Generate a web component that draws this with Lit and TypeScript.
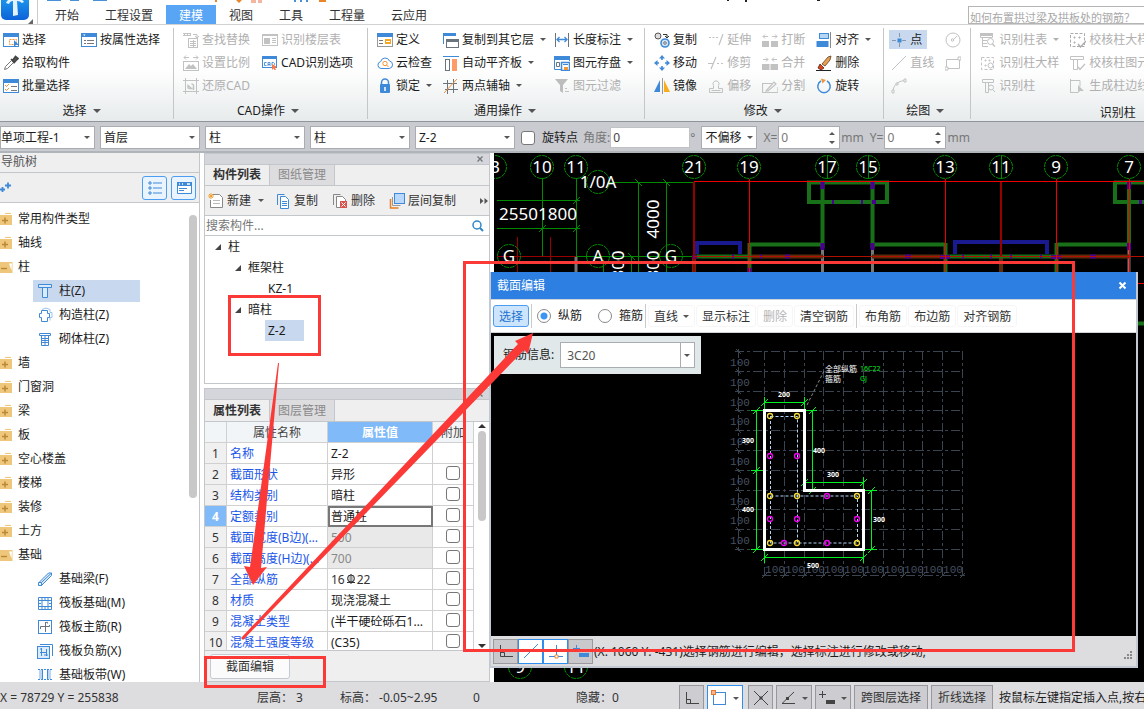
import { LitElement, html, svg, css, nothing } from "lit";
import { customElement, state } from "lit/decorators.js";
import { classMap } from "lit/directives/class-map.js";

const B = "#3f8ad8";
const D = "#c2c2c2";
const O = "#f0953a";
const K = "#6b747c";

const ico = (body: unknown, w = 16, h = 16) =>
  html`<svg class="ico" width=${w} height=${h} viewBox="0 0 ${w} ${h}" fill="none" aria-hidden="true">${body}</svg>`;

const windowFrame = (color: string, inner: unknown) => svg`
  <rect x="0.5" y="1.5" width="15" height="13" fill="#fff" stroke=${color}/>
  <rect x="0" y="1" width="16" height="4" fill=${color}/>${inner}`;

const icons: Record<string, unknown> = {
  select: ico(windowFrame(B, svg`<rect x="6.5" y="7.5" width="7" height="5" stroke=${O} stroke-dasharray="2 1"/><path d="M11 8v7l2-2h3z" fill=${B}/>`)),
  byProp: ico(windowFrame(B, svg`<path d="M2 2.500h2.500l-1.200 1.500z" fill="#fff"/><path d="M3 8.500h2M6 8.500h7M3 11.500h2M6 11.500h7" stroke="#777"/>`)),
  picker: ico(svg`<path d="M1.500 14.500l1-3 6-6 2 2-6 6z" stroke="#777" fill="#fff"/><path d="M8 4l4 4M9.500 5.500l3-4 2.500 2-4 4z" stroke="#444" stroke-width="1.600" fill="#555"/>`),
  batch: ico(windowFrame(B, svg`<path d="M2 7l1.500 1.500L6 6M2 11l1.500 1.500L6 10" stroke=${O}/><path d="M8 8.500h6M8 12.500h6" stroke="#777"/>`)),
  replace: ico(svg`<path d="M0 3.500h8M0 1.500h8M1.500 1v3M4.500 1v3M7.500 1v3M10 2.500h4v3M12 4l2 2 2-2" stroke=${D}/><rect x="5.500" y="6.500" width="9" height="9" stroke=${D}/><path d="M7 9.500h6M7 11.500h6M7 13.500h6M10.500 8v7" stroke=${D}/>`),
  floorTable: ico(svg`<rect x="0.500" y="2.500" width="15" height="11" stroke=${D}/><path d="M0 2h16v2H0z" fill=${D}/><rect x="2" y="6" width="6" height="6" fill=${D}/><path d="M10 6.500h4M10 8.500h4M10 10.500h4" stroke=${D}/>`),
  scale: ico(svg`<path d="M1 2.500h5M10 2.500h5M3 .5l-2 2 2 2M13 .5l2 2-2 2" stroke=${D}/><rect x="0.500" y="6.500" width="15" height="9" stroke=${D}/><path d="M2 14l4-5 2 2 2-2 4 5z" fill=${D}/>`),
  cadOption: ico(svg`<rect x="0.500" y="1.500" width="14" height="11" fill="#fff" stroke=${B}/><path d="M0 1h15v3H0z" fill=${B}/><path d="M4.500 7.500h-2v3h2M6 11V7.500h2V11M6 9.500h2M10 7.500h1.500l1 1v1l-1 1H10z" stroke=${B} stroke-width=".9"/><path d="M10 9l5 3-2 1 1 2h-1.500l-1-1.500L10 15z" fill="#f47b4b"/>`),
  restore: ico(svg`<path d="M0 2.500h16M0 13.500h16M2.500 0v16M13.500 0v16" stroke=${D}/><path d="M5 10.500V7.500L8 10M5.500 10.500h4M10.500 12V7l-2-1.500" stroke=${D} stroke-width="1.400"/>`),
  define: ico(svg`<rect x="0.500" y="1.500" width="15" height="13" fill="#fff" stroke="#999"/><path d="M0 1h16v4H0z" fill=${B}/><path d="M2 8.500h4M2 11.500h4" stroke="#777"/><rect x="8" y="7" width="6" height="5" fill="#f5a623"/><path d="M9 9.500h4" stroke="#fff"/>`),
  cloud: ico(svg`<path d="M4 13.500a3.500 3.500 0 0 1-.3-6.900A4.600 4.600 0 0 1 12.500 6a3.800 3.800 0 0 1-.3 7.500z" fill="#fff" stroke=${B}/><circle cx="8" cy="8.500" r="2.200" stroke=${O}/><path d="M9.500 10l2 2" stroke=${O}/>`),
  lock: ico(svg`<path d="M4.500 7V4.500a3.500 3.500 0 0 1 7 0V7" stroke=${B} stroke-width="1.500"/><rect x="3" y="6" width="10" height="9" rx="1" fill=${B}/><path d="M8 9v4" stroke="#fff" stroke-width="1.500"/>`),
  copyFloor: ico(svg`<path d="M.5 12V1.500h12V4" stroke=${B}/><path d="M0 1h13v3H0z" fill=${B}/><rect x="3.500" y="7.500" width="12" height="8" fill="#fff" stroke=${K}/><path d="M3 7h13v3H3z" fill=${K}/>`),
  alignSlab: ico(svg`<path d="M0 1.500h16" stroke=${B}/><rect x="2.500" y="4.500" width="4" height="11" stroke=${K}/><rect x="9" y="4" width="5" height="12" fill="#ff9a6a"/>`),
  axis2: ico(svg`<path d="M0 5.500h14M2 11.500h13M4.500 2v14M10.500 1v14" stroke=${K}/><path d="M1 15L14 1" stroke=${O}/>`),
  length: ico(svg`<path d="M1.500 1v14M14.500 1v14" stroke=${K}/><path d="M3 7.500h10M5.500 5L3 7.500 5.500 10M10.500 5L13 7.500 10.500 10" stroke=${B} stroke-width="1.300"/>`),
  saveEl: ico(svg`<path d="M7 14.500H.5v-13h15V6" stroke=${B}/><path d="M0 1h16v4H0z" fill=${B}/><path d="M2.500 7.500h3v4h-3z" stroke=${K}/><rect x="7.500" y="7.500" width="8" height="8" fill="#fff" stroke=${B} stroke-width="1.500"/><path d="M10 12h4v3h-4z" fill=${O}/><path d="M9 9.500h5" stroke=${B}/>`),
  filter: ico(svg`<path d="M1 1h13L9 7v8l-3-2V7z" fill="#bdbdbd"/><path d="M11 10.500h2M11 13.500h4" stroke=${D}/>`),
  copy: ico(svg`<circle cx="4" cy="4" r="3" stroke="#555" fill="#ddd"/><circle cx="11" cy="11" r="4" stroke=${B} stroke-width="1.600" fill="#cfe4f8"/><circle cx="11" cy="11" r="1.300" stroke="#777"/><path d="M9 2.500h4v3M11 4l2 2 2-2" stroke="#333"/>`),
  move: ico(svg`<path d="M8 5V1M8 11v4M5 8H1M11 8h4" stroke=${B} stroke-width="1.600"/><path d="M8 0l3 3.500H5zM8 16l3-3.500H5zM0 8l3.500-3v6zM16 8l-3.500-3v6z" fill=${B}/>`),
  mirror: ico(svg`<path d="M6 2v12H0z" fill=${B}/><path d="M8.500 0v16" stroke="#999"/><path d="M10 2v12h6z" fill="#f8ae1c"/>`),
  extend: ico(svg`<path d="M1 5.500h2M4.500 5.500h2M8 5.500h2M11 13l4-11" stroke=${D} stroke-width="1.200"/>`),
  trim: ico(svg`<path d="M0 8.500h5M3 14L8 2M9 8.500h2M13 8.500h2" stroke=${D} stroke-width="1.200"/>`),
  offset: ico(svg`<path d="M1.500 14.500v-4h4v-3a3 3 0 1 1 5 0v3h4v4z" stroke=${D}/><path d="M3.500 12.500h9" stroke=${D}/>`),
  breakEl: ico(svg`<rect x="0" y="9" width="7" height="6" fill=${D}/><rect x="9" y="9" width="7" height="6" fill=${D}/><path d="M1 4.500h5M10 4.500h5M3 2.500l-2 2 2 2M13 2.500l2 2-2 2" stroke=${D}/>`),
  merge: ico(svg`<rect x="0" y="9" width="7.500" height="6" fill=${D}/><rect x="8.500" y="9" width="7.500" height="6" fill=${D}/><path d="M1 4.500h5M10 4.500h5M4 2.500l2 2-2 2M12 2.500l-2 2 2 2" stroke=${D}/>`),
  split: ico(svg`<path d="M0 5.500h10M3 14.500h13V9M.5 6v8.500H3M4 13l8-9 2 2-8 7z" stroke=${D} stroke-width="1.200"/>`),
  align: ico(svg`<path d="M14.500 0v16" stroke="#8a8a8a"/><rect x="3.500" y="1.500" width="9" height="5" stroke=${B} fill="#b5d5f5"/><rect x="0.500" y="9" width="12" height="6" fill=${B}/>`),
  erase: ico(svg`<path d="M6 9l6-7 3-1-1 4-5 6z" fill="#e9a050" stroke="#5b3b20" stroke-width=".8"/><path d="M4 9l4 4-3 2-3-2z" fill="#d9441c" stroke="#5b2010" stroke-width=".8"/><path d="M0 15.500h15" stroke="#222"/>`),
  rotate: ico(svg`<path d="M11 3a6.200 6.200 0 1 1-6 0" stroke=${B} stroke-width="1.500"/><path d="M5 .5l5 1.500-3.500 3.500z" fill=${O}/>`),
  point: ico(svg`<path d="M1 8.500h4M11 8.500h4M8.500 1v4M8.500 11v4" stroke="#8a97a6"/><rect x="6.500" y="6.500" width="4" height="4" fill=${B}/>`),
  line: ico(svg`<path d="M1 15L15 1" stroke=${D}/>`),
  arc: ico(svg`<path d="M2 14C2 8 6 3 14 2.500" stroke=${D}/><path d="M1 12h2v3H1zM5 5h2v2H5zM13 1h2v3h-2z" fill="#fff" stroke=${D}/>`),
  circle: ico(svg`<circle cx="8" cy="8" r="7" stroke=${D}/><path d="M8 8l4-4" stroke=${D}/><circle cx="7.500" cy="8" r="1.200" stroke=${D}/>`),
  rect: ico(svg`<path d="M1.500 4.500h13v9h-13z" stroke=${D}/><path d="M0 12h3v3H0zM13 2h3v3h-3z" fill="#fff" stroke=${D}/>`),
  colTable: ico(svg`<path d="M.5 1.500h12v4H.5zM2.500 6v8.500H8M2 8.500h5M2 11.500h5" stroke=${D}/><path d="M0 1h13v3H0z" fill=${D}/><circle cx="10.500" cy="9.500" r="3" stroke=${D}/><path d="M12.500 12l2.500 2.500" stroke=${D} stroke-width="1.500"/>`),
  colDetail: ico(svg`<rect x="1.500" y="2.500" width="12" height="12" stroke=${D} stroke-dasharray="3 2"/><path d="M5 5h1v1H5zM9 5h1v1H9zM5 10h1v1H5z" stroke=${D}/><circle cx="10.500" cy="10.500" r="2.500" stroke=${D}/>`),
  colFind: ico(svg`<path d="M2.500 1.500h11v3h-11zM5.500 4.500v10h3v-10" stroke=${D}/><circle cx="11" cy="9.500" r="2.500" stroke=${D}/><path d="M12.500 11.500L15 14" stroke=${D}/>`),
  checkDetail: ico(svg`<rect x="0.500" y="1.500" width="14" height="13" stroke="#aaa" stroke-dasharray="3 1.500"/><path d="M4 5h1v1H4zM9 5h1v1H9zM4 10h1v1H4z" stroke="#aaa"/><path d="M8 12l2.500 3L16 9" stroke="#aaa" stroke-width="1.300"/>`),
  checkEl: ico(svg`<path d="M.5 1.500h13v3H.5zM3.500 4.500v10h4v-10" stroke=${D}/><path d="M8 12l2 2.500L15 9" stroke=${D} stroke-width="1.300"/>`),
  genEdge: ico(svg`<path d="M.5 1v14M0 14.500h8M1 2.500h9v6" stroke=${D}/><path d="M8 7v8l2-2h4z" fill=${D}/>`),
};

interface Tool { label: string; icon: string; off?: boolean; menu?: boolean; on?: boolean; }
interface Group { name: string; cols: Tool[][]; menu: boolean; cls: string; }
const t = (icon: string, label: string, o: Partial<Tool> = {}): Tool => ({ icon, label, ...o });
const off = { off: true };
const menu = { menu: true };

const GROUPS: Group[] = [
  { name: "选择", menu: true, cls: "first", cols: [[t("select", "选择"), t("picker", "拾取构件"), t("batch", "批量选择")], [t("byProp", "按属性选择")]] },
  { name: "CAD操作", menu: true, cls: "cad", cols: [
    [t("replace", "查找替换", off), t("scale", "设置比例", off), t("restore", "还原CAD", off)],
    [t("floorTable", "识别楼层表", off), t("cadOption", "CAD识别选项")]] },
  { name: "通用操作", menu: true, cls: "tight", cols: [
    [t("define", "定义"), t("cloud", "云检查"), t("lock", "锁定", menu)],
    [t("copyFloor", "复制到其它层", menu), t("alignSlab", "自动平齐板", menu), t("axis2", "两点辅轴", menu)],
    [t("length", "长度标注", menu), t("saveEl", "图元存盘", menu), t("filter", "图元过滤", off)]] },
  { name: "修改", menu: true, cls: "", cols: [
    [t("copy", "复制"), t("move", "移动"), t("mirror", "镜像")],
    [t("extend", "延伸", off), t("trim", "修剪", off), t("offset", "偏移", off)],
    [t("breakEl", "打断", off), t("merge", "合并", off), t("split", "分割", off)],
    [t("align", "对齐", menu), t("erase", "删除"), t("rotate", "旋转")]] },
  { name: "绘图", menu: true, cls: "draw", cols: [
    [t("point", "点", { on: true }), t("line", "直线", off), t("arc", "", off)],
    [t("circle", "", off), t("rect", "", off)]] },
  { name: "识别柱", menu: false, cls: "wide", cols: [
    [t("colTable", "识别柱表", { off: true, menu: true }), t("colDetail", "识别柱大样", off), t("colFind", "识别柱", off)],
    [t("checkDetail", "校核柱大样", off), t("checkEl", "校核柱图元", off), t("genEdge", "生成柱边线", off)]] },
];

const shared = css`
  :host {
    display: block;
    box-sizing: border-box;
    font: 12px/20px "Noto Sans", "Noto Sans CJK SC", sans-serif;
    color: #1c1c1c;
    white-space: nowrap;
  }
  *, *::before, *::after { box-sizing: border-box; }
  button, input, select { font: inherit; color: inherit; margin: 0; padding: 0; border: 0; background: none; border-radius: 0; }
  button { display: inline-flex; align-items: center; cursor: pointer; }
  ul { list-style: none; margin: 0; padding: 0; display: flex; flex-direction: column; }
  .ico { display: block; flex: none; }
  .caret { flex: none; border: 3px solid transparent; border-top-color: #555; border-bottom: 0; }
  .check { appearance: none; width: 14px; height: 14px; border: 1px solid #777; border-radius: 3px; background: #fff; display: block; flex: none; }
  .check:checked { background: #3f8ad8; }
  .combo { position: relative; display: block; flex: none; height: 23px; background: #fff; border: 1px solid #a9acb1; }
  .combo select { appearance: none; width: 100%; height: 100%; padding: 0 14px 0 3px; outline: 0; display: block; }
  .combo::after { content: ""; position: absolute; right: 4px; top: 9px; border: 3px solid transparent; border-top-color: #555; border-bottom: 0; pointer-events: none; }
`;

@customElement("ribbon-bar")
class RibbonBar extends LitElement {
  @state() tab = "建模";
  static styles = [shared, css`
    .top { display: flex; align-items: flex-end; height: 25px; background: #fff; border-bottom: 1px solid #d2d2d2; position: relative; }
    .brand { width: 38px; height: 24px; border-right: 1px solid #ccc; margin-right: 4px; }
    .quick { position: absolute; left: 0; top: 0; pointer-events: none; }
    .tab { height: 19px; padding: 2px 13px 0; color: #333; }
    .tab.on { background: #58a5f5; color: #fff; }
    .ask { margin-left: auto; width: 176px; height: 18px; border: 1px solid #b4b4b4; border-right: 0; padding: 5px 0 0 1px; font-size: 11px; line-height: 14px; overflow: hidden; }
    .ask::placeholder { color: #a8a8a8; }
    .ribbon { display: flex; height: 97px; padding-top: 3px; background: linear-gradient(#fff 45%, #e7ebec); border-bottom: 1px solid #8e959b; overflow: hidden; }
    .group { flex: none; display: flex; flex-direction: column; padding: 0 12px 0 9px; border-right: 1px solid #c4c6c8; margin-bottom: 2px; }
    .group.first { padding: 0 13px 0 3px; }
    .group.cad { padding-right: 14px; }
    .group.tight { padding-right: 11px; }
    .group.draw { padding: 0 9px 0 5px; }
    .group.wide { min-width: 296px; border-right: 0; }
    .cols { display: flex; gap: 11px; }
    .cad .cols { gap: 12px; }
    .tight .cols { gap: 8px; }
    .tight .col:first-child { margin-right: 3px; }
    .draw .cols { gap: 9px; }
    .col { display: flex; flex-direction: column; align-items: flex-start; }
    .tool { height: 23px; gap: 3px; }
    .tool .caret { margin-left: 3px; }
    .draw .tool { padding-left: 2px; }
    .tool.off { color: #b0b0b0; }
    .tool.off .caret { border-top-color: #b0b0b0; }
    .tool.on { height: 19px; margin: 2px 0; padding-right: 5px; background: #c8d8ef; }
    .name { flex: none; display: flex; justify-content: center; align-items: center; gap: 6px; height: 28px; }
    .name .caret { border-width: 4px; border-bottom: 0; }
    .wide .name { height: 32px; }
  `];
  render() {
    return html`
      <header class="top">
        <div class="brand">
          <svg width="34" height="24" viewBox="0 0 34 24" role="img" aria-label="应用菜单">
            <defs><linearGradient id="lg" x1="0" y1="0" x2="0" y2="1"><stop offset="0" stop-color="#1fa6f3"/><stop offset="1" stop-color="#0d62d8"/></linearGradient></defs>
            <rect x="1" y="-8" width="28" height="28" rx="5" fill="url(#lg)"/>
            <path d="M6 3q2-5 8-5 8 0 10 4l-2 1q-2-2-5-2l1 14-5 1V1q-3 0-4 3z" fill="#e4f2fd"/>
            <path d="M33 19v5h-5z" fill="#666"/>
          </svg>
        </div>
        <svg class="quick" width="840" height="4" viewBox="0 0 840 4" aria-hidden="true">
          <path d="M47 0h14v1H47zM70 0h9v1h-9zM93 0h14v1H93zM294 0h2v2h-2zM300 0h2v2h-2zM306 0h2v2h-2z" fill="#4a90d9"/>
          <path d="M215 0h2v2h-2zM236 0h6l-3 3zM319 0h7v2h-7z" fill="#e8872a"/><path d="M251 0h5v3h-5zM258 0h4v3h-4z" fill="#f3b6a0"/>
          <path d="M727 0h2v1h-2zM745 0h2v2h-2zM817 0h3v1h-3z" fill="#222"/>
        </svg>
        ${["开始", "工程设置", "建模", "视图", "工具", "工程量", "云应用"].map((n) => html`
          <button class=${classMap({ tab: true, on: n === this.tab })} @click=${() => (this.tab = n)}>${n}</button>`)}
        <input class="ask" aria-label="帮助搜索" placeholder="如何布置拱过梁及拱板处的钢筋？">
      </header>
      <div class="ribbon">
        ${GROUPS.map((g) => html`
          <section class="group ${g.cls}">
            <div class="cols">${g.cols.map((c) => html`<div class="col">${c.map((x) => html`
              <button class=${classMap({ tool: true, off: !!x.off, on: !!x.on })} ?disabled=${!!x.off} aria-label=${x.label || x.icon}>
                ${icons[x.icon]}${x.label ? html`<span>${x.label}</span>` : nothing}${x.menu ? html`<i class="caret"></i>` : nothing}
              </button>`)}</div>`)}</div>
            <div class="name">${g.name}${g.menu ? html`<i class="caret"></i>` : nothing}</div>
          </section>`)}
      </div>`;
  }
}

@customElement("context-bar")
class ContextBar extends LitElement {
  static styles = [shared, css`
    .bar { display: flex; align-items: center; height: 31px; padding-top: 2px; background: #c9cbd0; border-bottom: 2px solid #b0b5ba; overflow: hidden; }
    .combo { width: 100px; margin-right: 5px; }
    .combo.cut { width: 95px; }
    .combo.cut select { padding-left: 0; }
    .combo.small { width: 56px; margin: 0 6px; }
    .combo.small::after { right: 3px; }
    .grey { color: #777; }
    .check { margin: 0 7px 0 1px; }
    .rot { margin-right: 5px; }
    .field { width: 80px; height: 21px; background: #fff; border: 1px solid #c0c2c6; padding: 0 2px; color: #444; }
    .num { display: flex; align-items: center; width: 62px; height: 23px; background: #fff; border: 1px solid #a9acb1; color: #777; padding: 0 4px 0 2px; margin: 0 1px; }
    .num input { flex: 1; min-width: 0; outline: 0; }
    .gap { margin-right: 6px; }
  `];
  num(id: string, name: string) {
    return html`<label class="grey" for=${id}>${name}=</label>
      <span class="num"><input id=${id} value="0"><svg width="6" height="12" viewBox="0 0 6 12" aria-hidden="true"><path d="M0 3h6L3 0zM0 9h6l-3 3z" fill="#555"/></svg></span>
      <span class="grey gap">mm</span>`;
  }
  render() {
    const combos = [["项目", "单项工程-1", "cut"], ["楼层", "首层", ""], ["类别", "柱", ""], ["类型", "柱", ""], ["构件", "Z-2", ""]];
    return html`<div class="bar">
      ${combos.map(([n, v, c]) => html`<span class="combo ${c}"><select aria-label=${n}><option>${v}</option></select></span>`)}
      <input class="check" type="checkbox" id="rp"><label class="rot" for="rp">旋转点</label>
      <label class="grey" for="angle">角度:</label><input class="field" id="angle" value="0"><span class="grey">°</span>
      <span class="combo small"><select aria-label="偏移方式"><option>不偏移</option></select></span>
      ${this.num("dx", "X")}${this.num("dy", "Y")}
    </div>`;
  }
}

const leaf: Record<string, unknown> = {
  col: ico(svg`<path d="M1.500 1.500h13v3h-13zM5.500 4.500v10h5v-10" stroke=${B} fill="#dcebfb"/>`),
  ccol: ico(svg`<path d="M5 2.500q4-3 8 0v3h2v5h-2v3" stroke="#9cc4ee"/><path d="M4.500 3.500h6v3h2v4h-2v4h-6v-4h-2v-4h2z" stroke=${B} fill="#fff"/>`),
  mcol: ico(svg`<path d="M2.500 2.500h11v2h-11z" stroke=${B}/><path d="M4.500 4.500h7v10h-7zM4 7.500h8M4 9.500h8M4 11.500h8M8 5v9" stroke=${B}/>`),
  beam: ico(svg`<path d="M1.500 12l10-10h3v2.500l-10 10h-3zM4.500 14.500v-3h-3M4.500 11.500l10-9.500" stroke=${B} fill="#dcebfb"/>`),
  raft: ico(svg`<path d="M1.500 2.500h13v12h-13zM5 2v13M11 2v13M1 5.500h14M1 11.500h14" stroke=${B}/><path d="M1 8.500h3M12 8.500h3M8 2v3M8 12v3" stroke=${B}/>`),
  main: ico(svg`<rect x="1.500" y="1.500" width="13" height="13" stroke=${B}/><path d="M8.500 3.500q3-1 2 1M8.500 3v10M3.500 10V7.500h9V6" stroke=${K}/>`),
  neg: ico(svg`<path d="M3 1.500h12.500V13" stroke=${B}/><rect x="0.500" y="3.500" width="12" height="12" stroke=${B} fill="#dcebfb"/><path d="M4.500 5v8M9.500 6v7M3 9.500h6M7 12h4M3 6h2" stroke=${B}/>`),
  strip: ico(svg`<path d="M2 3h3v9H2zM11 3h3v9h-3z" fill="#b9d6f5"/><path d="M1 2.500h14M1 12.500h14" stroke=${B} stroke-dasharray="2 1"/><path d="M5.500 3v9M10.500 3v9" stroke=${B}/>`),
};

@customElement("nav-tree")
class NavTree extends LitElement {
  static styles = [shared, css`
    :host { display: flex; flex-direction: column; border-right: 1px solid #c3c6cb; background: #fff; overflow: hidden; }
    .title { height: 20px; padding-left: 1px; background: #efeff0; border-bottom: 1px solid #c3c6cb; color: #555; line-height: 18px; flex: none; }
    .tools { height: 30px; flex: none; display: flex; align-items: center; gap: 4px; padding-right: 3px; background: #efeff0; border-bottom: 1px solid #c3c6cb; }
    .plus { margin-right: auto; }
    .mode { width: 25px; height: 24px; justify-content: center; border: 1px solid #4a9df0; border-radius: 3px; background: #eaf4fe; }
    .body { flex: 1; min-height: 0; display: flex; justify-content: space-between; padding: 4px 2px 0 0; overflow: hidden; }
    .row { flex: none; display: flex; align-items: center; height: 24px; gap: 5px; line-height: 24px; }
    .row.leaf { height: 22px; margin: 1px 0 1px 33px; padding: 0 4px; gap: 6px; width: 107px; line-height: 22px; }
    .row.on { background: #c8d8ef; }
    .bar { flex: none; width: 8px; height: 283px; margin-top: 8px; border-radius: 4px; background: #c8c8c8; }
  `];
  render() {
    const folder = (open: boolean) => ico(open
      ? svg`<path d="M0 3h12.500v11H0z" fill="#efc77c"/><path d="M9 4.500h3l-.5 7z" fill="#fff"/><path d="M1 9.500h6" stroke="#b98a33" stroke-width="1.500"/>`
      : svg`<path d="M0 4h12v10H0z" fill="#efc77c"/><path d="M5 2h6v1H5z" fill="#efc77c"/><path d="M2 9.500h6M5 6.500v6" stroke="#b98a33" stroke-width="1.500"/>`, 13);
    const rows: [string, string][] = [["常用构件类型", "+"], ["轴线", "+"], ["柱", "-"], ["柱(Z)", "col"], ["构造柱(Z)", "ccol"], ["砌体柱(Z)", "mcol"],
      ["墙", "+"], ["门窗洞", "+"], ["梁", "+"], ["板", "+"], ["空心楼盖", "+"], ["楼梯", "+"], ["装修", "+"], ["土方", "+"], ["基础", "-"],
      ["基础梁(F)", "beam"], ["筏板基础(M)", "raft"], ["筏板主筋(R)", "main"], ["筏板负筋(X)", "neg"], ["基础板带(W)", "strip"]];
    return html`
      <div class="title">导航树</div>
      <div class="tools">
        <span class="plus">${ico(svg`<path d="M0 9.500h5M2.500 7v5M5 5.500h6M8 2.500v6" stroke=${B} stroke-width="1.800"/>`)}</span>
        <button class="mode" aria-label="列表视图">${ico(svg`<path d="M2 2h2v2H2zM2 7h2v2H2zM2 12h2v2H2z" stroke=${B}/><path d="M6 3h9M6 8h9M6 13h9" stroke=${B}/>`)}</button>
        <button class="mode" aria-label="面板视图">${ico(svg`<path d="M1.500 2.500h14v11h-14z" stroke=${B} fill="#fff"/><path d="M1 2h15v4H1z" fill=${B}/><path d="M3 4h1M6 4h1M11 4h3" stroke="#fff" stroke-width="1.500"/><path d="M3 8.500h8M3 10.500h5" stroke=${B}/>`)}</button>
      </div>
      <div class="body">
        <ul>${rows.map(([n, k]) => leaf[k]
          ? html`<li class=${classMap({ row: true, leaf: true, on: k === "col" })}>${leaf[k]}<span>${n}</span></li>`
          : html`<li class="row">${folder(k === "-")}<span>${n}</span></li>`)}</ul>
        <div class="bar"></div>
      </div>`;
  }
}

const panel = css`
  :host { display: flex; flex-direction: column; border: 1px solid #c3c6cb; background: #fff; overflow: hidden; }
  .strip { flex: none; height: 11px; background: #d4d6dc; border-bottom: 1px solid #c3c6cb; display: flex; justify-content: flex-end; padding-right: 5px; }
  .tabs { flex: none; display: flex; height: 22px; background: #efeff0; border-bottom: 1px solid #c3c6cb; }
  .tabs button { padding: 0 8px; border-right: 1px solid #c3c6cb; color: #8a8a8a; background: #dddddf; }
  .tabs .on { font-weight: bold; color: #333; background: #efeff0; }
`;
const closeStrip = html`<div class="strip"><button aria-label="关闭">${ico(svg`<path d="M1.500 1.500l5 5M6.500 1.500l-5 5" stroke="#777" stroke-width="1.400"/>`, 8, 8)}</button></div>`;

@customElement("component-panel")
class ComponentPanel extends LitElement {
  static styles = [shared, panel, css`
    .tabs { height: 21px; }
    .tools { flex: none; height: 30px; display: flex; align-items: center; padding: 0 1px 0 3px; background: #efeff0; border-bottom: 1px solid #c3c6cb; color: #333; }
    .tools button { gap: 3px; margin-right: 14px; }
    .tools button:first-child { margin-right: 11px; }
    .tools button:first-child .caret { margin-left: 4px; }
    .tools .more { margin: 0 0 0 auto; }
    .search { flex: none; display: flex; align-items: center; height: 20px; padding: 0 5px 0 1px; border-bottom: 1px solid #c3c6cb; }
    .search input { flex: 1; min-width: 0; outline: 0; height: 18px; }
    .search input::placeholder { color: #777; }
    .node { display: flex; align-items: center; height: 21px; gap: 7px; padding-left: 10px; }
    .lv2 { padding-left: 30px; }
    .lv3 { padding-left: 60px; }
    .pick { padding: 0 18px 0 3px; line-height: 21px; }
    .pick.on { background: #c8d8ef; }
  `];
  render() {
    const tri = ico(svg`<path d="M6 0v6H0z" fill="#444"/>`, 6, 6);
    return html`${closeStrip}
      <div class="tabs"><button class="on">构件列表</button><button>图纸管理</button></div>
      <div class="tools">
        <button>${ico(svg`<path d="M4.500 1.500h7l3 3v10h-12V7" stroke="#888" fill="#fff"/><path d="M5 7.500h7M5 10.500h7" stroke="#bbb"/><path d="M0 3h6M3 0v6M1 1l4 4M5 1L1 5" stroke="#f0a030"/>`)}新建<i class="caret"></i></button>
        <button>${ico(svg`<path d="M2.500 12V1.500h7" stroke=${B}/><path d="M5.500 3.500h5l3 3v9h-8z" stroke=${B} fill="#fff"/><path d="M7 8.500h5M7 10.500h5M7 12.500h5" stroke=${B}/>`)}复制</button>
        <button>${ico(svg`<path d="M1.500 12V1.500h7" stroke="#888"/><path d="M4.500 3.500h6l3 3v8h-9z" stroke="#888" fill="#fff"/><path d="M8 8h7v7H8z" fill="#d9534f"/><path d="M9.500 9.500l4 4M13.500 9.500l-4 4" stroke="#fff"/>`)}删除</button>
        <button>${ico(svg`<path d="M1.500 6v9h8" stroke="#e67e22" stroke-width="1.500"/><path d="M3.500 4v8.500h8" stroke="#999"/><rect x="5.500" y="0.500" width="10" height="10" fill="#b9d8fb" stroke=${B}/>`)}层间复制</button>
        <button class="more" aria-label="更多">${ico(svg`<path d="M0 1l3.500 3L0 7zM4.500 1L8 4 4.500 7z" fill="#555"/>`, 8, 8)}</button>
      </div>
      <div class="search"><input aria-label="搜索构件" placeholder="搜索构件...">${ico(svg`<circle cx="5" cy="5" r="4" stroke="#2f86c8" stroke-width="1.500"/><path d="M8 8l3 3" stroke="#2f86c8" stroke-width="2"/>`, 12, 12)}</div>
      <ul>
        <li class="node">${tri}柱</li>
        <li class="node lv2">${tri}框架柱</li>
        <li class="node lv3"><span class="pick">KZ-1</span></li>
        <li class="node lv2">${tri}暗柱</li>
        <li class="node lv3"><span class="pick on">Z-2</span></li>
      </ul>`;
  }
}

@customElement("property-panel")
class PropertyPanel extends LitElement {
  static styles = [shared, panel, css`
    .area { flex: 1; min-height: 0; display: flex; overflow: hidden; border-bottom: 1px solid #c3c6cb; }
    .scroll { flex: 1; min-width: 0; overflow: hidden; }
    table { width: 100%; table-layout: fixed; border-collapse: separate; border-spacing: 0; }
    th, td { height: 21px; padding: 1px 3px 0; border: 0 solid #d0d0d0; border-width: 0 1px 1px 0; font-weight: normal; text-align: left; line-height: 19px; overflow: hidden; text-overflow: ellipsis; }
    thead th { text-align: center; padding: 1px 0 0; background: #f2f5f8; color: #444; text-overflow: clip; }
    thead .hot { background: #80baf9; color: #fff; font-weight: bold; }
    tbody th { padding: 1px 0 0; text-align: center; background: #f0f0f0; color: #333; }
    tbody th.hot { background: #80baf9; color: #fff; font-weight: bold; }
    .c0 { width: 22px; } .c1 { width: 101px; } .c3 { width: 41px; }
    .name { color: #1a56e8; }
    .dim { background: #e9e9e9; color: #888; }
    .edit { border: 2px solid #777; padding: 0 1px; line-height: 17px; }
    .check { margin: -3px auto 0; }
    .rebar { display: inline-flex; align-items: center; gap: 1px; color: #333; vertical-align: top; }
    .bar { flex: none; width: 15px; display: flex; flex-direction: column; align-items: center; justify-content: space-between; padding: 2px 0; }
    .thumb { width: 8px; height: 90px; border-radius: 4px; background: #c8c8c8; margin: 3px 0 auto; }
    .foot { flex: none; height: 30px; padding: 3px 5px; background: #efeff0; }
    .foot button { height: 25px; padding: 1px 15px 0; background: #fbfbfc; border: 1px solid #c5c9d3; border-radius: 3px; color: #333; }
  `];
  render() {
    const rebar = html`<span class="rebar">16${ico(svg`<circle cx="5" cy="4.500" r="3.500" stroke="#333"/><path d="M5 0v10M1 8.500h8" stroke="#333"/><path d="M3 1v7M7 1v7" stroke="#333" stroke-width=".6"/>`, 10, 12)}22</span>`;
    const rows: [string, unknown, string?][] = [["名称", "Z-2"], ["截面形状", "异形"], ["结构类别", "暗柱"], ["定额类别", "普通柱", "edit"],
      ["截面宽度(B边)(mm)", "500", "dim"], ["截面高度(H边)(mm)", "700", "dim"], ["全部纵筋", rebar], ["材质", "现浇混凝土"],
      ["混凝土类型", "(半干硬砼砾石10mm)"], ["混凝土强度等级", "(C35)"]];
    return html`${closeStrip}
      <div class="tabs"><button class="on">属性列表</button><button>图层管理</button></div>
      <div class="area">
        <div class="scroll"><table>
          <thead><tr><th class="c0"></th><th class="c1">属性名称</th><th class="hot">属性值</th><th class="c3">附加</th></tr></thead>
          <tbody>${rows.map(([n, v, c], i) => html`<tr>
            <th class=${c === "edit" ? "hot" : ""}>${i + 1}</th><td class="name">${n}</td><td class=${c ?? ""}>${v}</td>
            <td>${i ? html`<input class="check" type="checkbox" aria-label="附加${n}">` : nothing}</td></tr>`)}</tbody>
        </table></div>
        <div class="bar">${ico(svg`<path d="M0 4h8L4 0z" fill="#333"/>`, 8, 4)}<div class="thumb"></div>${ico(svg`<path d="M0 0h8L4 4z" fill="#333"/>`, 8, 4)}</div>
      </div>
      <div class="foot"><button>截面编辑</button></div>`;
  }
}

@customElement("drawing-canvas")
class DrawingCanvas extends LitElement {
  static styles = [shared, css`
    :host { background: #000; overflow: hidden; min-width: 0; }
    svg { display: block; width: 100%; height: 100%; }
    text { fill: #fff; font-size: 17px; text-anchor: middle; }
    .g { stroke: #008a00; } .dr { stroke: #980000; } .r { stroke: #f00000; } .mid { stroke: #b01000; }
    .wall { stroke: #187018; stroke-width: 4; } .bw { stroke: #1a1a90; stroke-width: 4; }
    .gy { stroke: #777; stroke-width: 3; } .br { stroke: #5e2a0c; stroke-width: 4; } .p { stroke: #4b0090; stroke-width: 4; }
  `];
  render() {
    const bubbles: [number, number, string][] = [[495, 167, "3"], [542, 167, "10"], [576, 167, "11"], [598, 182, "1/0A"], [694, 167, "21"], [749, 167, "19"],
      [827, 167, "17"], [868, 167, "15"], [945, 167, "13"], [1001, 167, "11"], [1056, 167, "9"], [1129, 167, "7"],
      [509, 256, "G"], [598, 256, "A"], [671, 256, "G"], [520, 667, "9"], [576, 667, "11"]];
    return html`<svg role="img" aria-label="平面图"><g transform="translate(-494 -153)" fill="none">
      <path class="g" d="M610 182.500h84M497 200.500h83M497 228.500h83M542.500 178v78M576.500 178v78M638.500 182v92M666.500 182v92M576 256.500h118M603.500 260v14M631.500 256v18M827.500 155v24M868.500 155v24M1001.500 155v24M635 179l7 7M663 179l7 7M573 204l7-7M573 232l7-7M539 232l7-7M628 253l7 7"/>
      <path class="dr" d="M497 256.500h79M517.500 237v37M550.500 237v37"/>
      <path class="gy" d="M576 257v17M822.500 248v26M872.500 248v26M1129 248v26"/>
      <path class="br" d="M694 256v18M749 256.500h74M872 256.500h74M1056 256.500h73M1001 256v18"/>
      <path class="wall" d="M807 182.500h82M809 181v23M887 181v23M807 202h82M822.500 182v66M872.500 182v66M749 244.500h74M872 244.500h74M749.500 243v31M945.500 243v31M1056.500 243v31M1056 244.500h73M1129 182v66M1114 182.500h40M1115 181v23M1113 202h40M694 256.500h56M945 256.500h112M1138 323.500h8"/>
      <path class="bw" d="M697 254v-11h43v11M955 254v-12h92v12"/>
      <path class="p" d="M822.500 182v7M872.500 182v7M822.500 243v7M872.500 243v7M872 202h4M861 202h2M832 202h2M1129 182v7M1129 243v7M940 257h10M1051 257h10M692 257h5M905 256.500h6M785 256.500h5M760 256.500h2M1090 256.500h6M990 256.500h2M1010 256.500h2M962 256.500h2M1040 256.500h2M732 256.500h2M1139 202h3M749.500 268v6"/>
      <path class="dr" stroke-width="2" d="M694 182v92M1001 182v74"/>
      <path class="mid" d="M694 256.500h460"/>
      <path class="r" d="M694 181.500h460M749.500 179v95M945.500 179v95M1056.500 179v95M1129.500 179v95M1138 283.500h10"/>
      ${bubbles.map(([x, y, s]) => svg`<circle class="g" cx=${x} cy=${y} r="11.500" stroke-dasharray="5 1"/><text x=${x} y=${y + 6}>${s}</text>`)}
      <text x="538" y="220">25501800</text>
      <text transform="translate(659 219) rotate(-90)">4000</text>
      <text transform="translate(624 265) rotate(-90)">800</text>
      <text transform="translate(659 265) rotate(-90)">800</text>
    </g></svg>`;
  }
}

@customElement("section-dialog")
class SectionDialog extends LitElement {
  static styles = [shared, css`
    :host { display: flex; flex-direction: column; border: 2px solid #c3c9d2; border-top: 0; background: #000; overflow: hidden; }
    .title { flex: none; display: flex; justify-content: space-between; align-items: center; height: 27px; margin: 0 -2px; padding: 0 11px 0 8px; background: #2d7fe1; color: #fff; }
    .tools { flex: none; display: flex; align-items: center; gap: 1px; height: 34px; padding-left: 2px; background: #fff; border: 1px solid #cfd2d6; border-width: 1px 0; }
    .tools button { height: 22px; padding: 1px 5px 0; border: 1px solid #f6f6f6; border-radius: 3px; color: #333; gap: 5px; }
    .tools button.on { background: #cce4fc; border-color: #4a9df0; color: #1c72d0; }
    .tools button.off { color: #b5b5b5; }
    .sep { width: 1px; height: 24px; background: #c8cacd; margin: 0 1px; }
    .opt { display: flex; align-items: center; gap: 7px; margin: 0 0 0 3px; }
    .opt + .opt { margin-left: 15px; }
    .radio { appearance: none; width: 14px; height: 14px; border: 1px solid #888; border-radius: 50%; background: #fff; }
    .radio:checked { background: radial-gradient(circle, #3d95f2 0 3px, #fff 4px); }
    .view { flex: 1; min-height: 0; position: relative; }
    .view svg { display: block; width: 100%; height: 100%; }
    .info { position: absolute; left: 3px; top: 3px; display: flex; align-items: center; gap: 6px; height: 38px; padding: 0 6px 0 9px; background: #e1e8ea; }
    .info .combo { width: 135px; height: 26px; color: #555; }
    .info .combo select { padding-left: 6px; padding-top: 1px; }
    .info .combo::before { content: ""; position: absolute; right: 13px; top: 0; bottom: 0; border-left: 1px solid #a9acb1; }
    .info .combo::after { top: 11px; }
    .status { flex: none; height: 30px; display: flex; align-items: center; padding: 0 4px 0 2px; background: #dddde0; }
    .status button { width: 25px; height: 25px; justify-content: center; background: #c9c9cd; border: 1px solid #9a9a9e; }
    .status .on { background: #fff; border-color: #2f8fee; }
    .status span { padding: 2px 0 0 1px; }
    .grip { margin: 8px 0 0 auto; }
    .grid { stroke: #3a4350; stroke-dasharray: 9 3 3 3; }
    .dim { stroke: #00f020; }
    .n { fill: #fff; font: bold 7px "Noto Sans", "Noto Sans CJK SC", sans-serif; text-anchor: middle; }
    .lab { fill: #fff; font: 8px "Noto Sans", "Noto Sans CJK SC", sans-serif; }
    .gr { fill: #00f020; font-size: 7px; }
    .m { fill: #465060; font: 11px "Liberation Mono", monospace; text-anchor: middle; }
  `];
  section() {
    const step = Array.from({ length: 11 }, (_, i) => Math.round(i * 19.8));
    const yellow = [[770, 416], [797, 416], [770, 496], [797, 496], [857, 496], [770, 543], [797, 543], [857, 543]];
    const pink = [[770, 456], [797, 456], [827, 496], [770, 519], [797, 519], [857, 519], [784, 543], [827, 543]];
    const mark = (c: string) => ([x, y]: number[]) => svg`<circle cx=${x} cy=${y} r="2.500" stroke=${c} stroke-width="1.300"/>`;
    const nums: [number, number, string][] = [[784, 397, "200"], [748, 443, "300"], [748, 512, "400"], [819, 453, "400"], [833, 477, "300"], [879, 522, "300"], [813, 568, "500"]];
    const ticks = [[764, 402], [804, 402], [756, 410], [756, 470], [756, 549], [812, 410], [812, 490], [804, 482], [863, 482], [871, 490], [871, 549], [764, 557], [863, 557]];
    return svg`<g transform="translate(-491 -333)" fill="none">
      ${step.map((d) => svg`<path class="grid" d="M735 ${351.5 + d}h228M${764.5 + d} 351v227"/><path stroke="#3a4350" d="M736 ${349 + d}l5 5M${762 + d} 578l5-5"/>`)}
      <path class="grid" d="M738.500 349v202M762 575.500h203"/>
      ${step.slice(0, 10).map((d) => svg`<text class="m" x="740" y=${366 + d}>100</text><text class="m" x=${775 + d} y="573">100</text>`)}
      <path d="M807 405l17-34" stroke="#888" stroke-dasharray="3 2"/>
      <path class="dim" d="M764 402.500h41M764.500 397v13M804.500 397v13M756.500 410v140M751 410.500h13M751 470.500h13M751 549.500h13M812.500 410v81M805 410.500h12M806 490.500h11M804 482.500h60M804.500 477v13M863.500 477v13M871.500 490v60M864 490.500h13M864 549.500h13M764 557.500h100M764.500 551v12M863.500 551v12"/>
      ${ticks.map(([x, y]) => svg`<path class="dim" d="M${x - 3} ${y + 4}l7-7"/>`)}
      <path d="M764.500 410.500h40v80h59v59h-99z" stroke="#fff" stroke-width="3"/>
      <path d="M770.500 416.500h27v127M770.500 416v127h87v-47h-87" stroke="#b4d4f4" stroke-dasharray="3 2"/>
      ${yellow.map(mark("#f5dc3a"))}${pink.map(mark("#f000f0"))}
      ${nums.map(([x, y, s]) => svg`<text class="n" x=${x} y=${y}>${s}</text>`)}
      <text class="lab" x="825" y="372">全部纵筋</text><text class="lab gr" x="860" y="371">16C22</text>
      <text class="lab" x="825" y="382">箍筋</text><text class="lab gr" x="860" y="381">GJ</text>
    </g>`;
  }
  render() {
    return html`
      <div class="title">截面编辑<button aria-label="关闭">${ico(svg`<path d="M1.500 1.500l6 6M7.500 1.500l-6 6" stroke="#fff" stroke-width="2"/>`, 9, 9)}</button></div>
      <div class="tools">
        <button class="on">选择</button><i class="sep"></i>
        <label class="opt"><input class="radio" type="radio" name="bar" checked>纵筋</label>
        <label class="opt"><input class="radio" type="radio" name="bar">箍筋</label><i class="sep"></i>
        <button>直线<i class="caret"></i></button><button>显示标注</button><button class="off" disabled>删除</button><button>清空钢筋</button><i class="sep"></i>
        <button>布角筋</button><button>布边筋</button><button>对齐钢筋</button>
      </div>
      <div class="view">
        <svg role="img" aria-label="柱截面">${this.section()}</svg>
        <div class="info"><label for="rb">钢筋信息:</label><span class="combo"><select id="rb"><option>3C20</option></select></span></div>
      </div>
      <div class="status">
        <button aria-label="正交">${ico(svg`<path d="M2.500 2v11.500H15M2.500 9.500h4v4" stroke="#444"/>`)}</button>
        <button class="on" aria-label="直线">${ico(svg`<path d="M1 15L15 1" stroke=${B}/>`)}</button>
        <button class="on" aria-label="垂足">${ico(svg`<path d="M8.500 2v10M1 13.500h14" stroke=${B}/><path d="M7 12h3v3H7z" stroke=${O} fill="#fff"/>`)}</button>
        <button aria-label="动态输入">${ico(svg`<path d="M0 5.500h7M3.500 2v7" stroke=${B}/><path d="M6 10h10v4H6z" fill=${B}/>`)}</button>
        <span>(X: 1060 Y: -431)选择钢筋进行编辑，选择标注进行修改或移动;</span>
        <svg class="grip" width="8" height="8" viewBox="0 0 8 8" aria-hidden="true"><path d="M6 0h2v2H6zM3 3h2v2H3zM6 3h2v2H6zM0 6h2v2H0zM3 6h2v2H3zM6 6h2v2H6z" fill="#888"/></svg>
      </div>`;
  }
}

@customElement("status-bar")
class StatusBar extends LitElement {
  static styles = [shared, css`
    .bar { display: flex; height: 27px; background: #dddde0; color: #333; overflow: hidden; padding-top: 3px; }
    .cell { flex: none; line-height: 25px; }
    .pos { width: 257px; } .floor { width: 83px; } .elev { width: 133px; } .count { width: 103px; }
    button { flex: none; height: 26px; min-width: 25px; justify-content: center; gap: 5px; padding: 0 3px; margin-right: 3px; background: #cdcdd1; border: 1px solid #98989c; color: #333; }
    button.on { background: #fff; border-color: #2f8fee; margin-right: 5px; }
    button.text { padding: 0 6px; }
    .tip { padding-left: 3px; color: #1c1c1c; }
  `];
  render() {
    const caret = html`<i class="caret"></i>`;
    return html`<footer class="bar">
      <span class="cell pos">X = 78729 Y = 255838</span><span class="cell floor">层高： 3</span><span class="cell elev">标高： -0.05~2.95</span>
      <span class="cell count">0</span><span class="cell count">隐藏：0</span>
      <button aria-label="正交">${ico(svg`<path d="M2.500 2v11.500H15M2.500 9.500h4v4" stroke="#444"/>`)}</button>
      <button class="on" aria-label="捕捉">${ico(svg`<rect x="2.500" y="2.500" width="12" height="12" stroke=${B}/><rect x="0.500" y="0.500" width="4" height="4" fill="#f7b58c" stroke="#e07a3a"/>`, 17)}${caret}</button>
      <button aria-label="交点">${ico(svg`<path d="M1 1l14 14M15 1L1 15" stroke="#444"/><path d="M7 7h2v2H7z" stroke="#444"/>`)}</button>
      <button aria-label="中点">${ico(svg`<path d="M14 2L2 13.500h13" stroke="#444"/><path d="M6 7h3v3H6z" fill="#444"/>`, 17)}${caret}</button>
      <button aria-label="输入">${ico(svg`<path d="M0 4.500h7M3.500 1v7" stroke="#444"/><path d="M7 10h9v4H7z" fill="#444"/>`, 17)}${caret}</button>
      <button class="text">跨图层选择</button><button class="text">折线选择</button>
      <span class="cell tip">按鼠标左键指定插入点,按右键确认</span>
    </footer>`;
  }
}

@customElement("app-root")
class AppRoot extends LitElement {
  static styles = [shared, css`
    :host { position: relative; display: flex; flex-direction: column; height: 100vh; min-height: 600px; overflow: hidden; background: #fff; }
    .work { flex: 1; min-height: 0; display: flex; gap: 4px; overflow: hidden; }
    nav-tree { flex: none; width: 200px; }
    .side { flex: none; width: 286px; display: flex; flex-direction: column; gap: 4px; }
    component-panel { flex: none; height: 231px; }
    property-panel { flex: 1; min-height: 0; }
    drawing-canvas { flex: 1; }
    ribbon-bar, context-bar, status-bar { flex: none; }
    section-dialog { position: absolute; left: 489px; right: 6px; top: 272px; height: 396px; }
    .marks { position: absolute; left: 0; top: 0; width: 100%; height: 100%; pointer-events: none; }
  `];
  render() {
    return html`
      <ribbon-bar></ribbon-bar>
      <context-bar></context-bar>
      <main class="work">
        <nav-tree></nav-tree>
        <div class="side"><component-panel></component-panel><property-panel></property-panel></div>
        <drawing-canvas></drawing-canvas>
      </main>
      <status-bar></status-bar>
      <section-dialog></section-dialog>
      <svg class="marks" aria-hidden="true">
        <g fill="none" stroke="#fb3a37" stroke-width="3">
          <rect x="464.500" y="262.500" width="609" height="388"/>
          <rect x="229.500" y="296.500" width="90" height="58"/>
          <rect x="205.500" y="657.500" width="119" height="29"/>
        </g>
        <path fill="#fb3a37" d="M278 363h1L261 568l6-1-14 18-9-19 6 1zM241 638l2 2L524 350l4 4 5-21-18 8 3 3z"/>
      </svg>`;
  }
}
